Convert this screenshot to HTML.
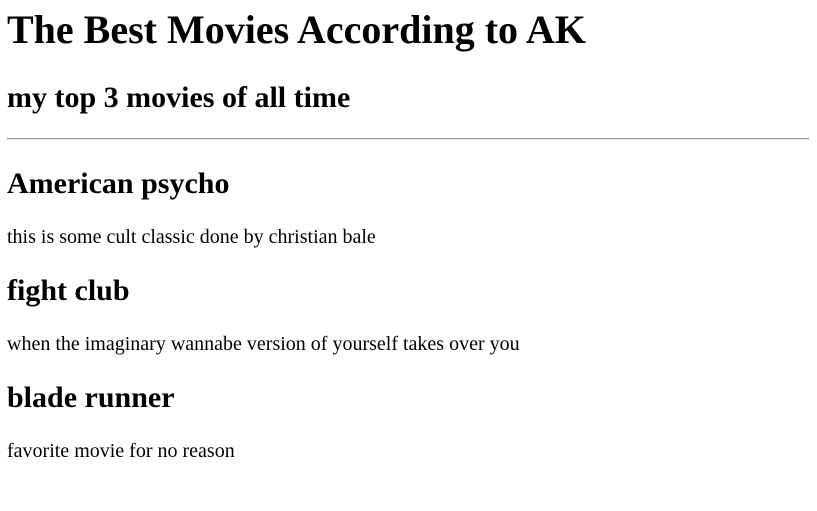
<!DOCTYPE html>
<html><head><meta charset="utf-8"><style>
body{margin:0 8px 0 7px;font-family:"Liberation Serif",serif;color:#000;background:#fff}
h1{font-size:40px;line-height:46px;margin:7px 0 0;font-weight:bold}
h2{font-size:30px;line-height:34px;margin:0;font-weight:bold}
p{font-size:20px;line-height:23px;margin:0}
hr{margin:23px 0 0;height:0;border:0;border-top:1px solid #9a9a9a;border-bottom:1px solid #eee}
.t1{margin-top:28px}
.a{margin-top:27px}
.p{margin-top:24.5px}
.h{margin-top:25.5px}
</style></head><body>
<h1>The Best Movies According to AK</h1>
<h2 class="t1">my top 3 movies of all time</h2>
<hr>
<h2 class="a">American psycho</h2>
<p class="p">this is some cult classic done by christian bale</p>
<h2 class="h">fight club</h2>
<p class="p">when the imaginary wannabe version of yourself takes over you</p>
<h2 class="h">blade runner</h2>
<p class="p">favorite movie for no reason</p>
</body></html>
